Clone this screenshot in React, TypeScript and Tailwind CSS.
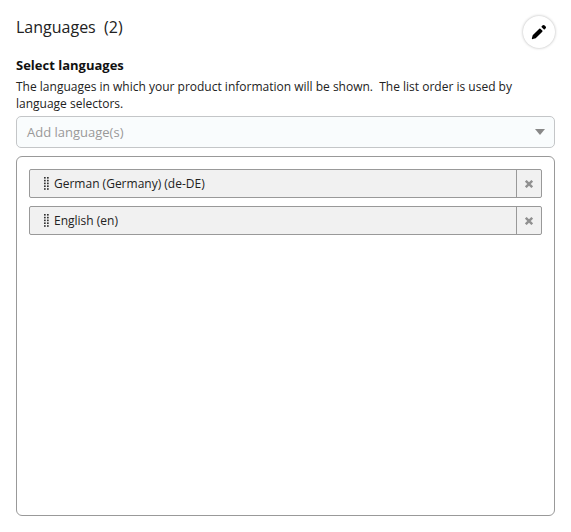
const languages = ["German (Germany) (de-DE)", "English (en)"];

function DragHandle() {
  return (
    <svg className="mr-[5px] ml-[14px] shrink-0" width="5" height="13" viewBox="0 0 5 13" fill="#333">
      {[0, 2.8, 5.6, 8.4, 11.2].map((y) => (
        <g key={y}>
          <rect x="0" y={y} width="1.7" height="1.6" />
          <rect x="3" y={y} width="1.7" height="1.6" />
        </g>
      ))}
    </svg>
  );
}

export default function App() {
  return (
    <main className="h-[532px] w-[571px] bg-white px-4 pt-[13px] font-['Open_Sans','Noto_Sans',sans-serif] text-[#222]">
      <header className="flex h-[43px] items-start justify-between">
        <h1 className="text-[16px] leading-7 whitespace-pre">Languages  (2)</h1>
        <button className="mt-[3px] flex size-8 items-center justify-center rounded-full bg-white shadow-[0_0_3px_rgba(0,0,0,0.3)]" aria-label="Edit">
          <svg width="16" height="16" viewBox="0 0 16 16" fill="#000">
            <path d="M1.7 11.3.9 14.3a.6.6 0 0 0 .8.8l3-.8 6.6-6.6a.8.8 0 0 0 0-1.1L9.4 4.7a.8.8 0 0 0-1.1 0zM10.7 3.3l2 2a.8.8 0 0 0 1.1 0l.7-.7a1.6 1.6 0 0 0 0-2.3l-.8-.8a1.6 1.6 0 0 0-2.3 0l-.7.7a.8.8 0 0 0 0 1.1z" />
          </svg>
        </button>
      </header>
      <h2 className="text-[13px] leading-[18px] font-bold text-[#111]">Select languages</h2>
      <p className="mt-1 text-[12px] leading-[17px] whitespace-pre">{"The languages in which your product information will be shown.  The list order is used by\nlanguage selectors."}</p>
      <div className="mt-1 flex h-8 w-[539px] items-center justify-between rounded-[5px] border border-[#c4c6c8] bg-[#f9fcfd] pr-[9px] pl-[10px] text-[13px] text-[#999]">
        <span className="leading-5">Add language(s)</span>
        <svg width="10" height="6" viewBox="0 0 10 6" fill="#888"><path d="M0 0h10L5 6z" /></svg>
      </div>
      <ul className="mt-2 flex h-[360px] w-[539px] flex-col gap-2 rounded-[6px] border border-[#999] px-3 pt-3">
        {languages.map((name) => (
          <li key={name} className="flex h-[29px] items-center rounded-[2px] border border-[#999] bg-[#f1f1f1] text-[12px]">
            <DragHandle />
            <span className="grow">{name}</span>
            <button className="flex h-full w-[25px] items-center justify-center border-l border-[#999]" aria-label="Remove">
              <svg className="mt-px" width="8" height="8" viewBox="0 0 8 8" stroke="#909090" strokeWidth="2.4"><path d="M.8.8l6.4 6.4M7.2.8L.8 7.2" /></svg>
            </button>
          </li>
        ))}
      </ul>
    </main>
  );
}
